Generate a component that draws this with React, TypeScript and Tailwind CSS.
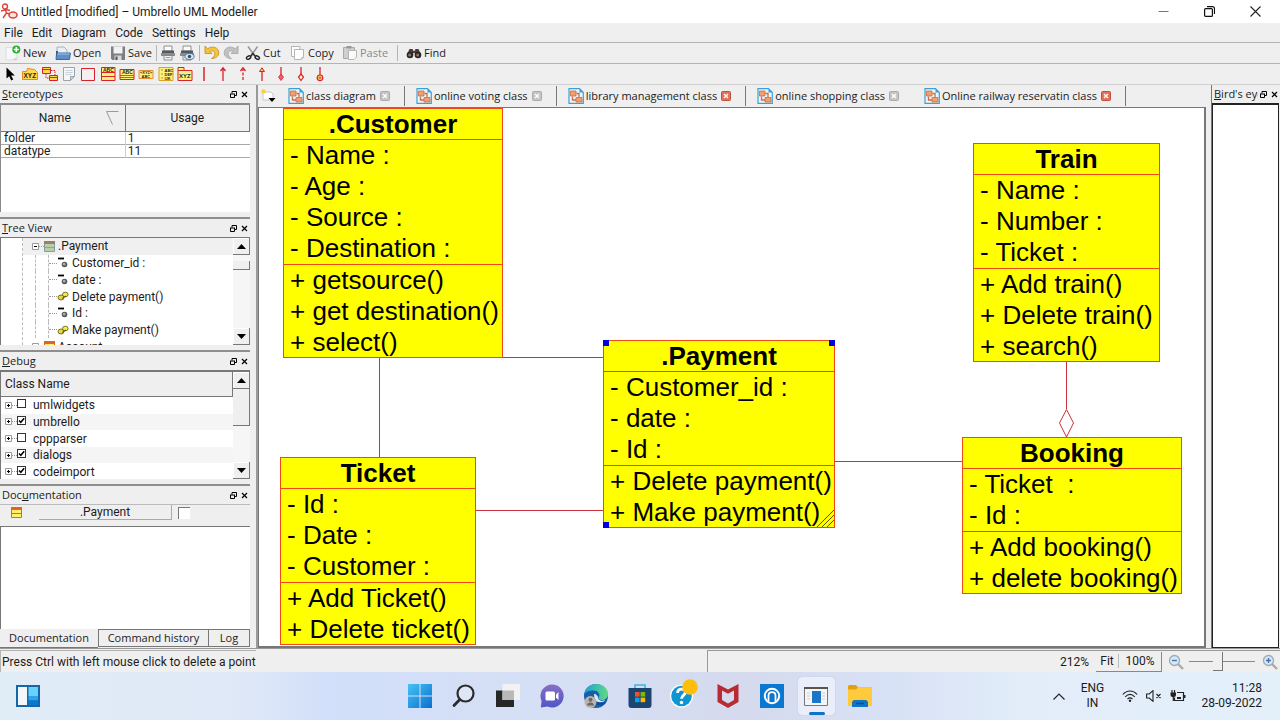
import React from "react";

const UI = "font-[Roboto,'Noto_Sans',sans-serif]";

/* ---------- small helpers ---------- */

function Svg({ className = "size-4", box = "0 0 16 16", children }: { className?: string; box?: string; children: React.ReactNode }) {
  return (
    <svg className={`shrink-0 ${className}`} viewBox={box} fill="none" aria-hidden="true">
      {children}
    </svg>
  );
}

function Tag({ x, y, size = 5, children }: { x: number; y: number; size?: number; children: string }) {
  return (
    <text x={x} y={y} fontSize={size} fontWeight="700" fill="#222" fontFamily="Liberation Sans, sans-serif">
      {children}
    </text>
  );
}

/* ---------- toolbar icons ---------- */

const IconNew = () => (
  <Svg>
    <path d="M1 2.5h8l3 3V15H1z" fill="#f7f7f7" stroke="#d4d4d4" strokeWidth=".7" />
    <path d="M7 15h4l1-3z" fill="#cfcfcf" />
    <circle cx="11.3" cy="4.5" r="4" fill="#2fae3a" />
    <path d="M11.3 2v5M8.8 4.5h5" stroke="#fff" strokeWidth="1.6" />
  </Svg>
);
const IconOpen = () => (
  <Svg>
    <path d="M2 2h7l3 3v6H2z" fill="#e9eef5" stroke="#8fa3bd" strokeWidth=".8" />
    <path d="M1 6h2v5H1z" fill="#2d5f9c" />
    <path d="M1 14.5 1.6 8h13.8l-.9 6.5z" fill="#5d8fc9" stroke="#2d5f9c" strokeWidth=".9" />
    <path d="M2.5 9h12" stroke="#a9c8ec" />
  </Svg>
);
const IconSave = () => (
  <Svg>
    <path d="M1 1.5h14V15H2.4L1 13.6z" fill="#7b7f84" />
    <path d="M3.5 1.5h9v7h-9z" fill="#f2f2f2" />
    <path d="M4.5 10.5h7V15h-7z" fill="#d9d9d9" />
    <path d="M5.5 11.5h2V15h-2z" fill="#555" />
  </Svg>
);
const IconPrint = ({ preview = false }: { preview?: boolean }) => (
  <Svg>
    <path d="M4 1h8v5H4z" fill="#fafafa" stroke="#777" strokeWidth=".8" />
    <path d="M2 5.5h12v5H2z" fill="#55585c" />
    <path d="M1 8h14v3H1z" fill="#8a8d91" />
    <path d="M4 10.5h8V15H4z" fill="#f5f5f5" stroke="#777" strokeWidth=".8" />
    <path d="M5.5 12.5h5" stroke="#999" />
    {preview && (
      <>
        <ellipse cx="10.5" cy="11.5" rx="4.6" ry="3" fill="#d7e6f5" stroke="#486a8f" strokeWidth=".9" />
        <circle cx="10.5" cy="11.5" r="1.7" fill="#24517f" />
      </>
    )}
  </Svg>
);
const IconTurn = ({ color, edge, flip = false }: { color: string; edge: string; flip?: boolean }) => (
  <Svg className={flip ? "size-4 -scale-x-100" : "size-4"}>
    <path d="M1 1v7.5h7L5.8 6.3C8.6 5 11.8 6.8 10.6 10c-.5 1.4-1.5 2.6-3 3.500 4 .2 7.200-2.200 7.200-5.900 0-5-6.200-7.200-11.200-3.900z" fill={color} stroke={edge} strokeWidth=".8" />
  </Svg>
);
const IconCut = () => (
  <Svg>
    <path d="M3 1.5 10 11M12.5 1.5 6 11" stroke="#9a9a9a" strokeWidth="1.6" />
    <path d="M7.5 8 10 11M8 8l-2 3" stroke="#333" strokeWidth="1.5" />
    <ellipse cx="3.6" cy="12.6" rx="2.3" ry="1.5" transform="rotate(-30 3.6 12.6)" stroke="#222" strokeWidth="1.4" />
    <ellipse cx="12.3" cy="12.6" rx="2.3" ry="1.5" transform="rotate(30 12.3 12.6)" stroke="#222" strokeWidth="1.4" />
  </Svg>
);
const IconCopy = () => (
  <Svg>
    <path d="M1.5 1.5h8.5v10H1.5z" fill="#fdfdfd" stroke="#b5b5b5" />
    <path d="M4.5 4.5h9v8l-2 2h-7z" fill="#fff" stroke="#b5b5b5" />
    <path d="M11.5 14.5v-2h2z" fill="#ddd" stroke="#b5b5b5" strokeWidth=".6" />
  </Svg>
);
const IconPaste = () => (
  <Svg>
    <path d="M1.5 2.5h11v11h-11z" fill="#cfcfcf" stroke="#aaa" />
    <path d="M4.5 1h5v2.5h-5z" fill="#999" />
    <path d="M6.5 5.5h8V12L12 14.5H6.5z" fill="#fbfbfb" stroke="#b5b5b5" />
  </Svg>
);
const IconFind = () => (
  <Svg>
    <path d="M3.5 4h3l1 2h1l1-2h3L15 9.5H8.800V8H7.200v1.500H1z" fill="#4a3a34" />
    <circle cx="4" cy="10" r="3.3" fill="#2b2523" />
    <circle cx="12" cy="10" r="3.3" fill="#2b2523" />
    <circle cx="3.7" cy="10" r="1.5" fill="#8b7b74" />
    <circle cx="11.7" cy="10" r="1.5" fill="#8b7b74" />
  </Svg>
);

const YEL = "#fff27a";
const RED = "#d8232a";

const drawTools: { label: string; icon: React.ReactNode }[] = [
  { label: "Select", icon: <Svg><path d="M3.500 1.500v11l2.700-2.300 2 4.300 2-1-2-4.100h3.600z" fill="#000" /></Svg> },
  { label: "Object", icon: <Svg><path d="M.5 5.500h4l1-3 7 1 3 3v7H.5z" fill="#ffd94a" stroke="#e08a2a" /><Tag x={1.5} y={12} size={6.5}>XYZ</Tag></Svg> },
  { label: "Class relation", icon: <Svg><path d="M.5 1.500h8v6h-8zM7.500 9.500h8v5h-8z" fill="#ffd94a" stroke={RED} /><path d="M.5 3.500h8M7.500 11.500h8" stroke={RED} /><path d="M9 4.500h4V9M4 8v4h3" stroke={RED} strokeDasharray="1.5 1" /></Svg> },
  { label: "Note", icon: <Svg><path d="M2.500 1.500h11v9l-4 4h-7z" fill="#f4f6f8" stroke="#9aa4ad" /><path d="M9.500 14.500v-4h4z" fill="#cfd6dc" stroke="#9aa4ad" /><path d="M4.500 4.500h7M4.500 6.500h7M4.500 8.500h6" stroke="#cbd2d8" /></Svg> },
  { label: "Box", icon: <Svg><path d="M1.500 2.500h13v12h-13z" stroke={RED} fill="#f6efef" /></Svg> },
  { label: "Class", icon: <Svg><path d="M1.500 1.500h13.500v13H1.500z" fill={YEL} stroke={RED} /><path d="M1.500 6.500H15M1.500 10.500H15" stroke={RED} /><Tag x={3} y={5.6}>ABC</Tag></Svg> },
  { label: "Interface", icon: <Svg><path d="M1 3.500h14v10H1z" fill={YEL} stroke={RED} /><path d="M1 9.500h14M1 11.500h14" stroke={RED} strokeWidth=".8" /><Tag x={3} y={8.3}>ABC</Tag></Svg> },
  { label: "Datatype", icon: <Svg><path d="M1 4.500h14v8H1z" fill={YEL} stroke="#e58a3a" /><Tag x={2} y={8} size={4}>«XYZ»</Tag><Tag x={3.5} y={12} size={4}>ABC</Tag></Svg> },
  { label: "Enum", icon: <Svg><path d="M1 1.500h14v13H1z" fill={YEL} stroke="#d9a520" /><path d="M3.500 4h1M3.500 8h1M3.500 12h1" stroke="#333" /><Tag x={6.5} y={5.6} size={4}>ABC</Tag><Tag x={6.5} y={9.8} size={4}>DEF</Tag><Tag x={6.5} y={13.8} size={4}>IJK</Tag></Svg> },
  { label: "Package", icon: <Svg><path d="M1 1.500h6v3H1zM1 4.500h14v10H1z" fill={YEL} stroke={RED} /><Tag x={2} y={12} size={6}>XYZ</Tag></Svg> },
  { label: "Association", icon: <Svg><path d="M8 1v14" stroke={RED} strokeWidth="1.5" /></Svg> },
  { label: "Directed association", icon: <Svg><path d="M8 2v13M5.500 5 8 1.800 10.500 5" stroke={RED} strokeWidth="1.3" /></Svg> },
  { label: "Dependency", icon: <Svg><path d="M8 2v13" stroke={RED} strokeWidth="1.3" strokeDasharray="3 1.5" /><path d="M5.500 5 8 1.800 10.500 5" stroke={RED} strokeWidth="1.3" /></Svg> },
  { label: "Generalization", icon: <Svg><path d="M8 5v10" stroke={RED} strokeWidth="1.3" /><path d="M5.500 5.500 8 1.800l2.500 3.700z" fill="#ffc84a" stroke={RED} /></Svg> },
  { label: "Composition", icon: <Svg><path d="M8 1v9" stroke={RED} strokeWidth="1.3" /><path d="M8 8l2.500 3L8 14.500 5.500 11z" fill="#f0606a" stroke={RED} strokeWidth=".8" /></Svg> },
  { label: "Aggregation", icon: <Svg><path d="M8 1v7" stroke={RED} strokeWidth="1.3" /><path d="M8 8l2.500 3L8 14.500 5.500 11z" fill="#fff6c8" stroke={RED} strokeWidth="1.2" /></Svg> },
  { label: "Containment", icon: <Svg><path d="M8 1v8" stroke={RED} strokeWidth="1.3" /><circle cx="8" cy="11.8" r="2.8" fill="#ffe45c" stroke={RED} strokeWidth="1.2" /><path d="M8 10.200v3.200M6.400 11.800h3.200" stroke={RED} strokeWidth=".7" /></Svg> },
];

const Sep = ({ className = "" }: { className?: string }) => <span className={`h-4 w-px shrink-0 bg-[#b4b4b4] ${className}`} />;

function ToolButton({ icon, label, text, muted = false, className = "" }: { icon: React.ReactNode; label: string; text?: boolean; muted?: boolean; className?: string }) {
  return (
    <button type="button" aria-label={label} className={`flex h-5 shrink-0 items-center gap-[2px] ${muted ? "text-[#8a8a8a]" : "text-[#1c1c1c]"} ${className}`}>
      {icon}
      {text && <span>{label}</span>}
    </button>
  );
}

/* ---------- dock pieces ---------- */

function DockTitle({ pre = "", hot, rest }: { pre?: string; hot: string; rest: string }) {
  return (
    <div className="flex h-[18px] shrink-0 items-center overflow-hidden pl-[2px] font-['Open_Sans',sans-serif] text-[11px]">
      <h2 className="min-w-0 flex-1 overflow-hidden whitespace-nowrap">
        {pre}
        <span className="underline underline-offset-1">{hot}</span>
        {rest}
      </h2>
      <button type="button" aria-label="Float" className="flex w-[11px] justify-center">
        <Svg className="size-[7px]" box="0 0 7 7">
          <path d="M2 2.500V.5h4.500v4H5" stroke="#000" />
          <path d="M0 3h5M.5 3v3.500h4V3" stroke="#000" />
        </Svg>
      </button>
      <button type="button" aria-label="Close" className="flex w-[11px] justify-center">
        <Svg className="size-[7px]" box="0 0 7 7">
          <path d="M1 1l5 5M6 1 1 6" stroke="#000" strokeWidth="1.2" />
        </Svg>
      </button>
    </div>
  );
}

function Scrollbar({ thumb }: { thumb: string }) {
  const face = "flex h-[17px] shrink-0 items-center justify-center border-r border-b border-[#777] bg-[#efefef] shadow-[inset_1px_1px_0_#fff]";
  return (
    <div className="flex w-[17px] shrink-0 flex-col bg-[#f6f6f6]">
      <button type="button" aria-label="Scroll up" className={face}>
        <Svg className="h-[5px] w-[9px]" box="0 0 9 5"><path d="M0 5 4.500 0 9 5z" fill="#000" /></Svg>
      </button>
      <div className="flex-1">
        <div className={`border-r border-b border-[#777] bg-[#efefef] ${thumb}`} />
      </div>
      <button type="button" aria-label="Scroll down" className={face}>
        <Svg className="h-[5px] w-[9px]" box="0 0 9 5"><path d="M0 0h9L4.500 5z" fill="#000" /></Svg>
      </button>
    </div>
  );
}

const ClassIcon = ({ faded = false }: { faded?: boolean }) => (
  <Svg className="size-[11px]" box="0 0 11 11">
    <path d="M.5.5h10v10H.5z" fill={faded ? "#b9cfa6" : "#fff06a"} stroke={faded ? "#8b9aa0" : "#e2622c"} />
    <path d="M0 0h11v3H0z" fill={faded ? "#9c7f6b" : "#e2622c"} />
    <path d="M1 6.500h9" stroke={faded ? "#8fa0b5" : "#e2622c"} />
  </Svg>
);
const AttrIcon = () => (
  <Svg className="size-3" box="0 0 12 12">
    <path d="M1 1.500h6" stroke="#000" strokeWidth="1.8" />
    <circle cx="7.500" cy="7.500" r="2.800" fill="#555" />
    <circle cx="7.200" cy="7.200" r="1.400" fill="#aaa" />
  </Svg>
);
const OpIcon = () => (
  <Svg className="size-3" box="0 0 12 12">
    <ellipse cx="4" cy="7.500" rx="3" ry="2.500" fill="#e6d93a" stroke="#5d5500" strokeWidth=".8" />
    <ellipse cx="8.300" cy="4.500" rx="2.800" ry="2.300" fill="#f5ea50" stroke="#5d5500" strokeWidth=".8" />
    <path d="M5 8.500 9 6" stroke="#5d5500" />
  </Svg>
);
const Expander = ({ open = false }: { open?: boolean }) => (
  <Svg className="size-[7px]" box="0 0 7 7">
    <path d="M.5.5h6v6h-6z" fill="#fff" stroke="#9a9a9a" />
    <path d={open ? "M2 3.500h3" : "M2 3.500h3M3.500 2v3"} stroke="#000" />
  </Svg>
);

const members: { name: string; op?: boolean }[] = [
  { name: "Customer_id :" },
  { name: "date :" },
  { name: "Delete payment()", op: true },
  { name: "Id :" },
  { name: "Make payment()", op: true },
];

const debugRows = [
  { name: "umlwidgets", on: false },
  { name: "umbrello", on: true },
  { name: "cppparser", on: false },
  { name: "dialogs", on: true },
  { name: "codeimport", on: true },
];

function LeftDock() {
  return (
    <aside className="flex w-[252px] shrink-0 flex-col pr-[2px]">
      <section className="flex h-[132px] shrink-0 flex-col">
        <DockTitle hot="S" rest="tereotypes" />
        <div className="h-[109px] border-t-2 border-l border-[#8a8a8a] bg-white">
          <table className="w-full table-fixed border-collapse">
            <thead>
              <tr className="h-[26px] bg-[#efefef]">
                <th className="border-r border-b border-[#777] p-0 font-normal">
                  <span className="flex items-center justify-end gap-[35px] pr-[6px]">
                    <span>Name</span>
                    <Svg className="h-[14px] w-[13px]" box="0 0 13 14"><path d="M12.500.5H.5l6 13" stroke="#999" /></Svg>
                  </span>
                </th>
                <th className="border-r border-b border-[#777] p-0 font-normal">Usage</th>
              </tr>
            </thead>
            <tbody>
              <tr className="h-[13px] border-b border-[#aaa] leading-[12px]">
                <td className="border-r border-[#ccc] p-0 pl-[3px]">folder</td>
                <td className="p-0 pl-[2px]">1</td>
              </tr>
              <tr className="h-[13px] border-b border-[#aaa] leading-[12px]">
                <td className="border-r border-[#ccc] p-0 pl-[3px]">datatype</td>
                <td className="p-0 pl-[2px]">11</td>
              </tr>
            </tbody>
          </table>
        </div>
      </section>

      <section className="flex h-[133px] shrink-0 flex-col border-t-2 border-[#8f8f8f]">
        <DockTitle hot="T" rest="ree View" />
        <div className="flex h-[108px] border-t border-l border-[#777] bg-white">
          <div className="flex-1 overflow-hidden">
            <ul className="ml-[21px] grid h-[117px] auto-rows-fr border-l border-dashed border-[#bbb]">
              <li className="flex items-center bg-[#f0f0f0] pl-[9px]">
                <Expander open />
                <span className="w-[5px] border-t border-dotted border-[#999]" />
                <ClassIcon faded />
                <span className="pl-[3px]">.Payment</span>
              </li>
              {members.map((m) => (
                <li key={m.name} className="ml-[12px] flex border-l border-dashed border-[#bbb] pl-[12px]">
                  <span className="flex flex-1 items-center border-l border-dashed border-[#bbb]">
                    <span className="w-2 border-t border-dotted border-[#999]" />
                    {m.op ? <OpIcon /> : <AttrIcon />}
                    <span className="pl-[3px]">{m.name}</span>
                  </span>
                </li>
              ))}
              <li className="flex items-center pl-[9px]">
                <Expander open />
                <span className="w-[5px] border-t border-dotted border-[#999]" />
                <ClassIcon />
                <span className="pl-[3px]">Account</span>
              </li>
            </ul>
          </div>
          <Scrollbar thumb="mt-[6px] h-[9px]" />
        </div>
      </section>

      <section className="flex h-[134px] shrink-0 flex-col border-t-2 border-[#8f8f8f]">
        <DockTitle hot="D" rest="ebug" />
        <div className="flex h-[109px] border-t-2 border-l border-[#777] bg-white">
          <div className="flex-1 overflow-hidden">
            <div className="flex h-[25px] items-center border-r border-b border-[#777] bg-[#efefef] pl-1">Class Name</div>
            <ul className="grid h-[83px] auto-rows-fr">
              {debugRows.map((r) => (
                <li key={r.name} className="flex items-center pl-1 even:bg-[#f5f5f5]">
                  <Expander />
                  <span className="w-[5px] border-t border-dotted border-[#999]" />
                  <label className="flex items-center gap-[7px]">
                    <span className="grid shrink-0 place-items-center pb-[3px]">
                      <input type="checkbox" defaultChecked={r.on} className="peer col-start-1 row-start-1 size-[9px] appearance-none border border-[#333] bg-white" />
                      <Svg className="invisible col-start-1 row-start-1 size-[7px] peer-checked:visible" box="0 0 7 7"><path d="M1 3.500 2.800 5.300 6.200 1.300" stroke="#000" strokeWidth="1.5" /></Svg>
                    </span>
                    {r.name}
                  </label>
                </li>
              ))}
            </ul>
          </div>
          <Scrollbar thumb="h-[37px]" />
        </div>
      </section>

      <section className="flex min-h-0 flex-1 flex-col border-t-2 border-[#8f8f8f]">
        <DockTitle pre="Doc" hot="u" rest="mentation" />
        <div className="flex h-4 shrink-0 items-center border-t border-[#bbb] pl-[11px]">
          <ClassIcon />
          <button type="button" className="ml-[17px] h-[15px] w-[133px] border-r border-b border-[#aaa] leading-[14px]">.Payment</button>
          <input type="checkbox" aria-label="Modified" className="ml-[6px] size-3 appearance-none border-t border-l border-[#777] bg-white" />
        </div>
        <textarea aria-label="Documentation" className="mt-[6px] min-h-0 flex-1 resize-none border-t border-l border-[#777] bg-white outline-none" />
        <div role="tablist" className="flex h-[19px] shrink-0 font-['Open_Sans',sans-serif] text-[11px]">
          <button role="tab" aria-selected="true" type="button" className="w-[98px] border-b border-[#777]">Documentation</button>
          <button role="tab" type="button" className="mb-px w-[111px] border border-[#777]">Command history</button>
          <button role="tab" type="button" className="mb-px flex-1 border border-l-0 border-[#777]">Log</button>
        </div>
      </section>
    </aside>
  );
}

/* ---------- diagram ---------- */

const DiagramIcon = () => (
  <Svg>
    <path d="M1 .7h10.500L15.300 4.500v10.800H1z" fill="#eaf6fd" stroke="#3aa0d8" strokeWidth="1.2" />
    <path d="M11.500.7v3.800h3.800z" fill="#3aa0d8" />
    <path d="M2.500 3H8v5H2.500zM8 9.500h6v4.500H8z" fill="#f0a070" stroke="#cf6b3c" strokeWidth=".8" />
    <path d="M4.500 8.500V12H8M8.500 5.500H11V9" stroke="#cf6b3c" strokeWidth="1.3" />
  </Svg>
);

const tabs = [
  { name: "class diagram", hot: false, last: false },
  { name: "online voting class", hot: false, last: false },
  { name: "library management class", hot: true, last: false },
  { name: "online shopping class", hot: false, last: true },
  { name: "Online railway reservatin class", hot: true, last: false },
];

type UmlProps = { place: string; title: string; attrs: string[]; ops: string[]; children?: React.ReactNode };

function UmlClass({ place, title, attrs, ops, children }: UmlProps) {
  return (
    <article className={`absolute border border-[#f04a12] bg-[#ffff00] text-[26px] leading-[31px] whitespace-pre text-black ${place}`}>
      <h3 className="h-[31px] border-b border-[#f04a12] text-center font-bold">{title}</h3>
      <ul className="border-b border-[#f04a12] pl-[6px]">
        {attrs.map((a) => <li key={a}>- {a}</li>)}
      </ul>
      <ul className="-mb-px pl-[6px]">
        {ops.map((o) => <li key={o}>+ {o}</li>)}
      </ul>
      {children}
    </article>
  );
}

function Canvas() {
  return (
    <div className="relative min-h-0 flex-1 overflow-hidden border-t border-r-2 border-b-2 border-l border-[#777] bg-white font-['Liberation_Sans',Arial,sans-serif]">
      <svg className="absolute top-0 left-0 h-[540px] w-[946px]" viewBox="0 0 946 540" fill="none" aria-hidden="true">
        <path d="M244 249.500h100M120.500 249v100M217 402.500h127M576 353.500h128M807.500 253v48" stroke="#c8323c" />
        <path d="M807.500 301.500l7 13.500-7 14-7-14z" fill="#fff" stroke="#c8323c" />
      </svg>
      <UmlClass place="left-[24px] top-0 w-[220px]" title=".Customer" attrs={["Name :", "Age :", "Source :", "Destination :"]} ops={["getsource()", "get destination()", "select()"]} />
      <UmlClass place="left-[714px] top-[35px] w-[187px]" title="Train" attrs={["Name :", "Number :", "Ticket :"]} ops={["Add train()", "Delete train()", "search()"]} />
      <UmlClass place="left-[344px] top-[232px] w-[232px]" title=".Payment" attrs={["Customer_id :", "date :", "Id :"]} ops={["Delete payment()", "Make payment()"]}>
        <span className="absolute -top-px -left-px size-[6px] bg-[#0000e0]" />
        <span className="absolute -top-px -right-px size-[6px] bg-[#0000e0]" />
        <span className="absolute -bottom-px -left-px size-[6px] bg-[#0000e0]" />
        <svg className="absolute right-0 bottom-0 size-[17px]" viewBox="0 0 17 17" fill="none" aria-hidden="true">
          <path d="M0 17 17 0M5 17 17 5M10 17l7-7" stroke="#5a5a00" />
        </svg>
      </UmlClass>
      <UmlClass place="left-[703px] top-[329px] w-[220px]" title="Booking" attrs={["Ticket  :", "Id :"]} ops={["Add booking()", "delete booking()"]} />
      <UmlClass place="left-[21px] top-[349px] w-[196px]" title="Ticket" attrs={["Id :", "Date :", "Customer :"]} ops={["Add Ticket()", "Delete ticket()"]} />
    </div>
  );
}

function Workspace() {
  return (
    <main className="flex min-w-0 flex-1 flex-col border-l-2 border-[#9a9a9a] pr-px">
      <div role="tablist" className="flex h-[22px] shrink-0 items-center overflow-hidden font-['Open_Sans',sans-serif] text-[11px] whitespace-nowrap">
        <button type="button" aria-label="New diagram" className="mr-[12px] ml-[2px]">
          <Svg>
            <path d="M3 4h8l2 2v6H3z" fill="#fff" stroke="#c8c8c8" />
            <circle cx="3.500" cy="3.500" r="2.200" fill="#f5d24a" />
            <path d="M8.500 10h7L12 14z" fill="#000" />
          </Svg>
        </button>
        {tabs.map((t) => (
          <div key={t.name} className="flex h-5 shrink-0 items-center">
            <button type="button" role="tab" className="flex items-center gap-[2px]">
              <DiagramIcon />
              {t.name}
            </button>
            <button type="button" aria-label={`Close ${t.name}`} className="ml-[4px]">
              <Svg className="size-[10px]" box="0 0 10 10">
                <rect x=".5" y=".5" width="9" height="9" rx="1" fill={t.hot ? "#e0705a" : "#c4c4c4"} stroke={t.hot ? "#c4503c" : "#aaa"} />
                <path d="M3 3l4 4M7 3 3 7" stroke="#fff" strokeWidth="1.3" />
              </Svg>
            </button>
            <span className={t.last ? "w-[25px]" : "mr-[11px] ml-[14px] h-5 w-px bg-[#777]"} />
          </div>
        ))}
      </div>
      <Canvas />
    </main>
  );
}

/* ---------- taskbar ---------- */

const taskApps: { label: string; active?: boolean; icon: React.ReactNode }[] = [
  { label: "Start", icon: <Svg className="size-6" box="0 0 24 24"><path d="M0 0h11.500v11.500H0zM12.500 0H24v11.500H12.500zM0 12.500h11.500V24H0zM12.500 12.500H24V24H12.500z" fill="url(#win)" /><defs><linearGradient id="win" x1="0" y1="0" x2="24" y2="24" gradientUnits="userSpaceOnUse"><stop stopColor="#45c3f5" /><stop offset="1" stopColor="#0a6fce" /></linearGradient></defs></Svg> },
  { label: "Search", icon: <Svg className="size-6" box="0 0 24 24"><circle cx="13.500" cy="9.500" r="8" fill="#dfe6f5" stroke="#2b2b2b" strokeWidth="2.2" /><path d="M7.800 15.500 2 21.500" stroke="#2b2b2b" strokeWidth="2.8" strokeLinecap="round" /></Svg> },
  { label: "Task view", icon: <Svg className="size-6" box="0 0 24 24"><path d="M0 6.500h18V23H0z" fill="#262626" /><path d="M6.500 0H24v16H6.500z" fill="#f2f2f2" /><path d="M6.500 6.500H18V16H6.500z" fill="#b9b9b9" /></Svg> },
  { label: "Chat", icon: <Svg className="size-6" box="0 0 24 24"><path d="M12 .5a11.500 11.500 0 1 1-4.500 22L.8 23.500 1.600 17A11.500 11.500 0 0 1 12 .5z" fill="url(#chat)" /><rect x="5.500" y="7.500" width="9.500" height="9" rx="1.500" fill="#fff" /><path d="M16 10.500 18.500 8v8L16 13.500z" fill="#fff" /><defs><linearGradient id="chat" x1="12" y1="0" x2="12" y2="24" gradientUnits="userSpaceOnUse"><stop stopColor="#8b6fc4" /><stop offset="1" stopColor="#4f55c8" /></linearGradient></defs></Svg> },
  { label: "Edge", icon: <Svg className="size-6" box="0 0 24 24"><circle cx="12" cy="12" r="12" fill="#1560ad" /><path d="M.3 10C1.500 3.500 6.500 0 12 0c7 0 12 4.800 12 10 0 4-3 6-6 6-3.500 0-4-1.600-3-3 1.500-3-1-6.500-5.500-6.500C5 6.500 1.500 8 .3 10z" fill="url(#edge)" /><path d="M8 12c-1 5 3 9.500 8.500 9.200 3-.2 5-1.700 6-3.200-4 2.200-11 .5-11-5.500z" fill="#0f4b91" /><path d="M10 10c2 0 4.500 2 4.300 5 2 2.500 5 2 7 1-2 3-9 3-10.800-.5z" fill="#dce8f8" /><circle cx="6.500" cy="18" r="6" fill="#b9b4ae" /><circle cx="6.500" cy="15.800" r="2" fill="#6d6863" /><path d="M3 21.500c0-4 7-4 7 0z" fill="#6d6863" /><defs><linearGradient id="edge" x1="0" y1="8" x2="24" y2="8" gradientUnits="userSpaceOnUse"><stop stopColor="#1d9fd8" /><stop offset="1" stopColor="#5fdc80" /></linearGradient></defs></Svg> },
  { label: "Microsoft Store", icon: <Svg className="size-6" box="0 0 24 24"><path d="M7 5V1h10v4" stroke="#38b4e8" strokeWidth="1.6" /><path d="M.5 4h23v17a3 3 0 0 1-3 3h-17a3 3 0 0 1-3-3z" fill="#1b4470" /><path d="M7 8h4.600v4.600H7z" fill="#f25022" /><path d="M12.600 8h4.600v4.600h-4.600z" fill="#7fba00" /><path d="M7 13.600h4.600v4.600H7z" fill="#00a4ef" /><path d="M12.600 13.600h4.600v4.600h-4.600z" fill="#ffb900" /></Svg> },
  { label: "Get Help", icon: <Svg className="-mt-[5px] h-[29px] w-7" box="0 0 28 29"><circle cx="11.500" cy="17" r="11.500" fill="#fff" /><circle cx="11.500" cy="17" r="10.300" fill="#0f96d0" /><path d="M7.500 14c.3-5.300 8-5 7.800-.5-.1 2.800-3.800 3-3.800 6.200" stroke="#fff" strokeWidth="2.8" /><circle cx="11.500" cy="23.500" r="1.700" fill="#fff" /><circle cx="20" cy="8" r="7.800" fill="#ffbe0b" /></Svg> },
  { label: "McAfee", icon: <Svg className="size-6" box="0 0 24 24"><path d="M1.500 0 12 5.500 22.500 0v18L12 24 1.500 18zM6 6.500V16l6 3.500 6-3.500V6.500l-6 3.300z" fill="#b92b33" fillRule="evenodd" /></Svg> },
  { label: "Browser", icon: <Svg className="size-6" box="0 0 24 24"><path d="M0 0h24v24H0z" fill="#0a77d0" /><circle cx="12" cy="12" r="7.200" stroke="#fff" strokeWidth="2" /><path d="M8.500 17.500V11.500c0-4.600 7-4.600 7 0v6" stroke="#fff" strokeWidth="1.8" /></Svg> },
  { label: "Umbrello", active: true, icon: <Svg className="h-[19px] w-6" box="0 0 24 19"><path d="M.5.5h23v18H.5z" fill="#f5f5f5" stroke="#777" /><path d="M0 0h24v2H0z" fill="#555" /><path d="M3 6h3M3 9h3M3 12h3M18 6h3M18 9h3M18 12h3" stroke="#ccc" /><path d="M8 4h9v12H8z" fill="#1b75c9" /></Svg> },
  { label: "File Explorer", icon: <Svg className="h-[22px] w-6" box="0 0 24 22"><path d="M0 1.500A1.500 1.500 0 0 1 1.500 0H8l2 2.500h14V7H0z" fill="#e0a010" /><path d="M0 4.500h8l2-2h14V21H0z" fill="#ffcb3d" /><path d="M4 22v-4a3 3 0 0 1 3-3h10a3 3 0 0 1 3 3v4z" fill="#1272c4" /><path d="M8 18.500h8" stroke="#0b4f92" strokeWidth="1.4" /></Svg> },
];

function Taskbar() {
  return (
    <footer className="grid h-12 shrink-0 grid-cols-[1fr_auto_1fr] items-center bg-[linear-gradient(90deg,#e0ecf6_0%,#dfe9f7_18%,#d2dffa_26%,#d6dff4_45%,#d5daee_58%,#d8e2f6_70%,#e2edf9_80%,#e3eff9_100%)]">
      <button type="button" aria-label="Widgets" className="ml-4 w-6">
        <Svg className="h-[22px] w-6" box="0 0 24 22">
          <path d="M0 0h24v22H0z" fill="#1667a8" />
          <path d="M2 2h9v18H2z" fill="#f3f6fa" />
          <path d="M12.500 2H22v9h-9.500z" fill="#67d3fb" />
          <path d="M12.500 11H22v4.500h-9.500z" fill="#2aa4ea" />
          <path d="M12.500 15.500H22V20h-9.500z" fill="#0b78d0" />
        </Svg>
      </button>
      <nav className="flex">
        {taskApps.map((a) => (
          <button key={a.label} type="button" aria-label={a.label} className="flex w-11 justify-center">
            <span className={`relative flex h-[38px] w-[37px] items-center justify-center rounded-[4px] ${a.active ? "bg-[#eaeefa] shadow-[0_0_1px_#9aa]" : ""}`}>
              {a.icon}
              {a.active && <span className="absolute bottom-0 left-[11px] h-[3px] w-4 rounded-full bg-[#1272c4]" />}
            </span>
          </button>
        ))}
      </nav>
      <div className="flex items-center justify-end pr-[18px] text-[12px] leading-[15px] text-[#1c1c1c]">
        <button type="button" aria-label="Hidden icons" className="mr-[15px]">
          <Svg className="h-[7px] w-3" box="0 0 12 7"><path d="M.5 6.500 6 1l5.500 5.500" stroke="#222" strokeWidth="1.2" /></Svg>
        </button>
        <button type="button" className="mr-[18px] w-6 text-center">ENG<br />IN</button>
        <button type="button" aria-label="Network, volume and battery" className="mr-[15px] flex items-center gap-2">
          <Svg className="h-3 w-4" box="0 0 16 12">
            <path d="M.8 4.500C5-.2 11-.2 15.200 4.500M3.200 6.800c3-3 6.600-3 9.600 0M5.500 9c1.700-1.500 3.300-1.500 5 0" stroke="#222" strokeWidth="1.1" />
            <circle cx="8" cy="10.700" r="1.200" fill="#222" />
          </Svg>
          <Svg className="h-3 w-4" box="0 0 16 12">
            <path d="M.6 4v4h2.600L7 11.300V.7L3.200 4zM10.500 4l4 4M14.500 4l-4 4" stroke="#222" strokeWidth="1.1" />
          </Svg>
          <Svg className="h-3 w-4" box="0 0 16 12">
            <path d="M7 2.500h6.500v8H4.500v-3" stroke="#222" strokeWidth="1.2" />
            <path d="M14 5h1.500v3H14zM7 7h4v2H7zM.5 2.500H6V5a2 2 0 0 1-2 2H2.500a2 2 0 0 1-2-2z" fill="#222" />
            <path d="M2 0v3M4.500 0v3M3.300 6v5" stroke="#222" strokeWidth="1.2" />
          </Svg>
        </button>
        <button type="button" className="text-right">11:28<br />28-09-2022</button>
      </div>
    </footer>
  );
}

const Magnifier = ({ plus = false }: { plus?: boolean }) => (
  <Svg>
    <path d="M10 10l5 5" stroke="#aaa" strokeWidth="2.4" />
    <circle cx="6.500" cy="6.500" r="5" fill="#dbe8f3" stroke="#9aabba" strokeWidth="1.3" />
    <path d={plus ? "M4 6.500h5M6.500 4v5" : "M4 6.500h5"} stroke="#3f74b0" strokeWidth="1.4" />
  </Svg>
);

export default function App() {
  return (
    <div className={`flex h-screen flex-col overflow-hidden bg-[#efefef] text-[12px] text-[#1c1c1c] ${UI}`}>
      <header className="flex h-[23px] shrink-0 items-center bg-white">
        <Svg className="mr-[3px] ml-px size-[17px]" box="0 0 17 17">
          <circle cx="4" cy="3.500" r="2.500" stroke="#e0443c" strokeWidth="1.4" />
          <path d="M4 6 5.500 10M0 8l5-1.500 4 1M5.500 10 2 15M5.500 10 9 11" stroke="#e0443c" strokeWidth="1.4" />
          <ellipse cx="12" cy="12" rx="4" ry="3" fill="#fbe3d8" stroke="#e0443c" strokeWidth="1.6" />
        </Svg>
        <h1 className="flex-1">Untitled [modified] – Umbrello UML Modeller</h1>
        <div className="flex pr-[2px]">
          <button type="button" aria-label="Minimize" className="flex h-[23px] w-[46px] items-center justify-center">
            <Svg className="size-[11px]" box="0 0 11 11"><path d="M.5 5.500h10" stroke="#777" /></Svg>
          </button>
          <button type="button" aria-label="Restore" className="flex h-[23px] w-[46px] items-center justify-center">
            <Svg className="size-[11px]" box="0 0 11 11"><rect x=".6" y="2.600" width="7.800" height="7.800" rx="1" stroke="#111" strokeWidth="1.2" /><path d="M3 .6h5.500a2 2 0 0 1 2 2V8" stroke="#111" strokeWidth="1.2" /></Svg>
          </button>
          <button type="button" aria-label="Close" className="flex h-[23px] w-[46px] items-center justify-center">
            <Svg className="size-[11px]" box="0 0 11 11"><path d="M.5.5l10 10M10.500.5l-10 10" stroke="#222" strokeWidth="1.1" /></Svg>
          </button>
        </div>
      </header>

      <nav className="flex h-5 shrink-0 items-center gap-[9px] border-b border-[#b4b4b4] pl-1">
        {["File", "Edit", "Diagram", "Code", "Settings", "Help"].map((m) => (
          <button key={m} type="button">{m}</button>
        ))}
      </nav>

      <div role="toolbar" aria-label="Main" className="flex h-[21px] shrink-0 items-center border-b border-[#b4b4b4] pl-[5px] font-['Open_Sans',sans-serif] text-[11px]">
        <ToolButton icon={<IconNew />} label="New" text className="w-[50px]" />
        <ToolButton icon={<IconOpen />} label="Open" text className="w-[55px]" />
        <ToolButton icon={<IconSave />} label="Save" text className="w-[46px]" />
        <Sep />
        <ToolButton icon={<IconPrint />} label="Print" className="ml-[3px]" />
        <ToolButton icon={<IconPrint preview />} label="Print preview" className="ml-[3px]" />
        <Sep className="mr-1 ml-1" />
        <ToolButton icon={<IconTurn color="#f3c53c" edge="#c08a18" />} label="Undo" />
        <ToolButton icon={<IconTurn color="#c2c2c2" edge="#a2a2a2" flip />} label="Redo" className="ml-[3px]" />
        <ToolButton icon={<IconCut />} label="Cut" text className="ml-[6px] w-[45px]" />
        <ToolButton icon={<IconCopy />} label="Copy" text className="w-[52px]" />
        <ToolButton icon={<IconPaste />} label="Paste" text muted className="w-[55px]" />
        <Sep className="mr-2" />
        <ToolButton icon={<IconFind />} label="Find" text />
      </div>

      <div role="toolbar" aria-label="Diagram tools" className="flex h-[21px] w-full shrink-0 items-center border-b border-[#d0d0d0] pl-[3px]">
        <div className="flex w-[325px] justify-between">
          {drawTools.map((t) => (
            <button key={t.label} type="button" aria-label={t.label}>{t.icon}</button>
          ))}
        </div>
      </div>

      <div className="flex min-h-0 flex-1 gap-1">
        <LeftDock />
        <Workspace />
        <aside className="flex w-[69px] shrink-0 flex-col border-l border-[#777]">
          <DockTitle hot="B" rest="ird's eye view" />
          <div className="mr-px flex-1 border border-t-2 border-[#222] bg-white" />
        </aside>
      </div>

      <div className="flex h-6 shrink-0 items-stretch border-t border-[#999] pt-px">
        <p className="flex min-w-[252px] items-center border-t border-l border-[#b4b4b4] pl-px whitespace-nowrap">Press Ctrl with left mouse click to delete a point</p>
        <div className="ml-auto flex w-[573px] items-center justify-end border-t border-l border-[#999] pr-[2px]">
          <span className="mr-[7px]">212%</span>
          <div className="flex h-5 items-center border-r border-b border-[#888]">
            <button type="button" className="w-[23px] border-r border-[#bbb] leading-[14px]">Fit</button>
            <button type="button" className="w-[42px]">100%</button>
          </div>
          <button type="button" aria-label="Zoom out" className="mr-[5px] ml-[6px]"><Magnifier /></button>
          <input
            type="range"
            aria-label="Zoom"
            min={0}
            max={100}
            defaultValue={42}
            className="h-[19px] w-[66px] appearance-none bg-transparent bg-[linear-gradient(#888,#888)] bg-[length:100%_1px] bg-center bg-no-repeat [&::-webkit-slider-thumb]:h-[19px] [&::-webkit-slider-thumb]:w-[10px] [&::-webkit-slider-thumb]:appearance-none [&::-webkit-slider-thumb]:border-r [&::-webkit-slider-thumb]:border-b [&::-webkit-slider-thumb]:border-[#777] [&::-webkit-slider-thumb]:bg-[#efefef]"
          />
          <button type="button" aria-label="Zoom in" className="ml-[7px]"><Magnifier plus /></button>
        </div>
      </div>

      <Taskbar />
    </div>
  );
}
